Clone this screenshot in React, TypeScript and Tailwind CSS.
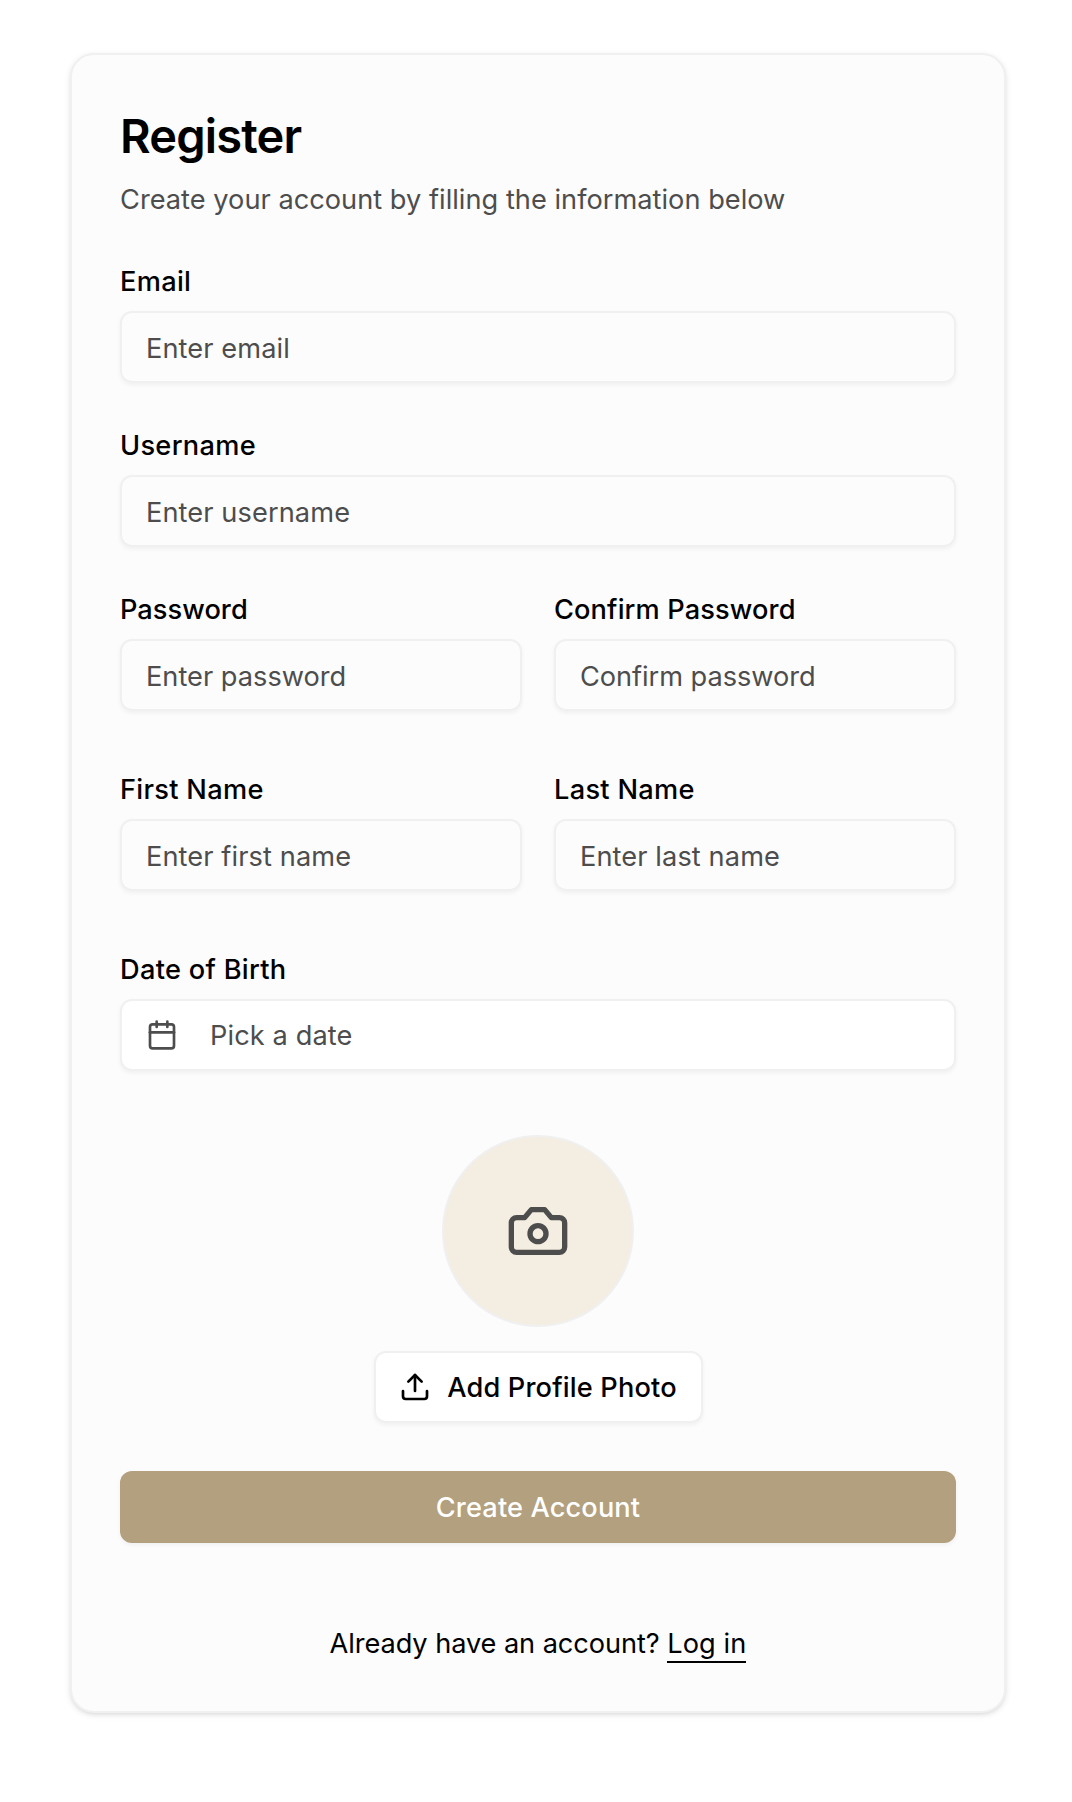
import type { ReactNode } from 'react';
import { Calendar } from 'lucide-react';

function CameraIcon() {
  return (
    <svg viewBox="0 0 24 24" className="size-16" fill="none" stroke="currentColor" strokeWidth="2" strokeLinecap="round" strokeLinejoin="round">
      <path d="M14.5 4h-5L7 7H4a2 2 0 0 0-2 2v9a2 2 0 0 0 2 2h16a2 2 0 0 0 2-2V9a2 2 0 0 0-2-2h-3l-2.5-3z" />
      <circle cx="12" cy="13" r="3" />
    </svg>
  );
}

function UploadIcon() {
  return (
    <svg viewBox="0 0 24 24" className="size-8 shrink-0" fill="none" stroke="currentColor" strokeWidth="2" strokeLinecap="round" strokeLinejoin="round">
      <path d="M21 15v4a2 2 0 0 1-2 2H5a2 2 0 0 1-2-2v-4" />
      <path d="m17 8-5-5-5 5" />
      <path d="M12 3v12" />
    </svg>
  );
}

function Field({ label, tracking = 'tracking-[0.3px]', children }: { label: string; tracking?: string; children: ReactNode }) {
  return (
    <div className="flex min-w-0 flex-1 flex-col gap-[15px]">
      <label className={`pt-px text-[27.2px] leading-7 font-medium text-black ${tracking}`}>{label}</label>
      {children}
    </div>
  );
}

function TextInput({ placeholder, type = 'text', tracking = 'tracking-[0.1px]' }: { placeholder: string; type?: string; tracking?: string }) {
  return (
    <input
      type={type}
      placeholder={placeholder}
      className={`h-18 w-full rounded-xl border-2 border-[#f0f0f0] bg-transparent px-6 pt-0.5 text-[27.2px] text-black shadow-[0_2px_4px_rgba(0,0,0,0.05)] outline-none placeholder:text-[#4d4d4d] ${tracking}`}
    />
  );
}

export default function App() {
  return (
    <div className="min-h-[1802px] bg-white pt-[53px] pl-[70px] font-[Inter,sans-serif] antialiased">
      <main className="flex h-[1660px] w-[936px] flex-col rounded-3xl border-2 border-[#f0f0f0] bg-[#fcfcfc] px-12 pt-12 shadow-[0_2px_6px_rgba(0,0,0,0.1),0_2px_4px_-2px_rgba(0,0,0,0.1)]">
        <header className="flex flex-col gap-3 pt-px">
          <h1 className="text-[47px] leading-16 font-semibold tracking-[-0.84px] text-black">Register</h1>
          <p className="text-[27.2px] leading-10 tracking-[0.02px] text-[#4d4d4d]">
            Create your account by filling the information below
          </p>
        </header>

        <form className="mt-[47px] flex flex-col">
          <Field label="Email">
            <TextInput placeholder="Enter email" />
          </Field>
          <div className="mt-12 flex">
            <Field label="Username">
              <TextInput placeholder="Enter username" />
            </Field>
          </div>
          <div className="mt-12 flex gap-8">
            <Field label="Password" tracking="tracking-[0.05px]">
              <TextInput placeholder="Enter password" type="password" tracking="tracking-[0.01px]" />
            </Field>
            <Field label="Confirm Password" tracking="tracking-[0.13px]">
              <TextInput placeholder="Confirm password" type="password" tracking="tracking-[-0.05px]" />
            </Field>
          </div>
          <div className="mt-16 flex gap-8">
            <Field label="First Name">
              <TextInput placeholder="Enter first name" />
            </Field>
            <Field label="Last Name">
              <TextInput placeholder="Enter last name" />
            </Field>
          </div>
          <div className="mt-16 flex">
            <Field label="Date of Birth">
              <button
                type="button"
                className="flex h-18 w-full items-center gap-8 rounded-xl border-2 border-[#f0f0f0] bg-white px-6 text-[27.2px] tracking-[0.1px] text-[#4d4d4d] shadow-[0_2px_4px_rgba(0,0,0,0.05)]"
              >
                <Calendar className="size-8" />
                <span className="pt-0.5">Pick a date</span>
              </button>
            </Field>
          </div>

          <div className="mt-16 flex flex-col items-center gap-6">
            <div className="flex size-48 items-center justify-center rounded-full border-2 border-[#f0f0f0] bg-[#f4ede1] text-[#4d4d4d]">
              <CameraIcon />
            </div>
            <button
              type="button"
              className="flex h-18 w-[329px] items-center justify-center gap-4 rounded-xl border-2 border-[#f0f0f0] bg-white text-[27.2px] font-medium tracking-[0.16px] whitespace-nowrap text-black shadow-[0_2px_4px_rgba(0,0,0,0.05)]"
            >
              <UploadIcon />
              <span className="pt-0.5">Add Profile Photo</span>
            </button>
          </div>

          <button
            type="submit"
            className="mt-12 h-18 rounded-xl bg-[#b2a07e] pt-0.5 text-[27.2px] font-medium tracking-[0.13px] text-white shadow-[0_2px_4px_rgba(0,0,0,0.05)]"
          >
            Create Account
          </button>
        </form>

        <p className="mt-[81px] text-center text-[27.2px] leading-10 tracking-[-0.08px] text-black">
          Already have an account?{' '}
          <a href="#" className="border-b-2 border-black pb-px tracking-[0.1px]">
            Log in
          </a>
        </p>
      </main>
    </div>
  );
}
